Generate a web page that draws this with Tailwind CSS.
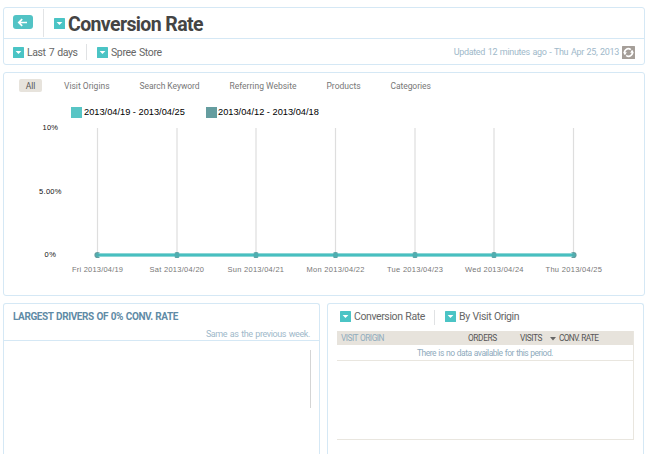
<!DOCTYPE html>
<html lang="en">
<head>
<meta charset="utf-8">
<title>Conversion Rate</title>
<script src="https://cdn.jsdelivr.net/npm/@tailwindcss/browser@4"></script>
</head>
<body class="w-[650px] h-[468px] overflow-hidden bg-white pl-[3px] pt-[7px] font-[Roboto,sans-serif] text-[#666] whitespace-nowrap">
<svg class="hidden"><symbol id="dd" viewBox="0 0 11 11"><rect width="11" height="11" rx=".6" fill="#4bc4c5"/><path d="M2.600 3.900h5.800L5.500 7z" fill="#fff"/></symbol></svg>

<header class="w-[642px] h-[58px] border border-[#d5e8f5] rounded-[3px]">
  <div class="h-[31px] flex items-center border-b border-[#d5e8f5] pl-[9px]">
    <svg class="w-5 h-[14px] -mt-[2px]" viewBox="0 0 20 14"><rect width="20" height="14" rx="3" fill="#52c3c5"/><path d="M5.600 7.500H14M9.200 4.200L5.800 7.500L9.200 10.800" fill="none" stroke="#fff" stroke-width="1.700"/></svg>
    <div class="ml-[10px] w-px h-[28px] bg-[#e2e4e6]"></div>
    <svg class="ml-[10px] mt-px w-[11px] h-[11px]"><use href="#dd"/></svg>
    <h1 class="ml-[3px] mt-[3px] text-[19.5px] leading-6 font-bold text-[#444] tracking-[-0.62px]">Conversion Rate</h1>
  </div>
  <div class="h-[25px] flex items-center pl-[9px] pr-[9px] text-[10.5px] tracking-[-0.4px] [word-spacing:0.8px]">
    <svg class="w-[11px] h-[11px] mt-px"><use href="#dd"/></svg>
    <span class="ml-[3px] mt-[2px] w-[49px]">Last 7 days</span>
    <div class="ml-[10px] w-px h-[16px] bg-[#e0e2e4]"></div>
    <svg class="ml-[10px] w-[11px] h-[11px] mt-px"><use href="#dd"/></svg>
    <span class="ml-[3px] mt-[2px] tracking-[-0.36px]">Spree Store</span>
    <span class="ml-auto mt-[3px] text-[9px] text-[#a0b9ca] tracking-[-0.34px]">Updated 12 minutes ago - Thu Apr 25, 2013</span>
    <svg class="ml-[3px] mt-px w-[13px] h-[13px]" viewBox="0 0 13 13"><rect width="13" height="13" rx=".5" fill="#a59e98"/><path d="M3.100 8.300A3.700 3.700 0 0 1 8.800 3.700M9.900 4.700A3.700 3.700 0 0 1 4.200 9.300" fill="none" stroke="#fff" stroke-width="1.600"/><path d="M1.200 6.200h3.700L3 9zM11.800 6.800H8.100L10 4z" fill="#fff"/></svg>
  </div>
</header>

<main class="mt-[7px] w-[642px] h-[224px] border border-[#d5e8f5] rounded-[3px]">
  <nav class="mt-[6px] h-[13px] flex items-center pl-[15px] text-[8.5px] text-[#777]">
    <span class="w-[23px] h-[13px] leading-[14px] text-center rounded-[2px] bg-[#e7e3dc] text-[#555]">All</span>
    <span class="ml-[22px] mt-px w-[75.500px]">Visit Origins</span>
    <span class="mt-px w-[90px] tracking-[-0.05px]">Search Keyword</span>
    <span class="mt-px w-[97px]">Referring Website</span>
    <span class="mt-px w-[64px]">Products</span>
    <span class="mt-px tracking-[-0.07px]">Categories</span>
  </nav>
  <div class="mt-[14px] h-[12px] flex items-center pl-[67px] font-['Liberation_Sans',sans-serif] text-[9.250px] text-black">
    <i class="w-[11px] h-[11px] bg-[#58c5c5]"></i><span class="ml-[2px] mt-px w-[122px]">2013/04/19 - 2013/04/25</span>
    <i class="w-[11px] h-[11px] bg-[#659d9f]"></i><span class="ml-[1px] mt-px">2013/04/12 - 2013/04/18</span>
  </div>
  <svg class="block w-[640px] h-[160px]" viewBox="4 118 640 160" font-family="Liberation Sans, sans-serif" font-size="7.500">
    <path d="M97.500 128V255M177 128V255M256 128V255M335.500 128V255M415 128V255M494 128V255M573.500 128V255" stroke="#dedede" stroke-width="1.200"/>
    <g fill="#659d9f"><circle cx="97.500" cy="255" r="3.100"/><circle cx="177" cy="255" r="3.100"/><circle cx="256" cy="255" r="3.100"/><circle cx="335.500" cy="255" r="3.100"/><circle cx="415" cy="255" r="3.100"/><circle cx="494" cy="255" r="3.100"/><circle cx="573.500" cy="255" r="3.100"/></g>
    <path d="M97.500 255H573.500" stroke="#a5dede" stroke-width="4"/>
    <path d="M97.500 255H573.500" stroke="#48bfc0" stroke-width="2.400"/>
    <g fill="#4faeb0"><circle cx="97.500" cy="255" r="2"/><circle cx="177" cy="255" r="2.600"/><circle cx="256" cy="255" r="2.600"/><circle cx="335.500" cy="255" r="2.600"/><circle cx="415" cy="255" r="2.600"/><circle cx="494" cy="255" r="2.600"/><circle cx="573.500" cy="255" r="2"/></g>
    <g fill="#111">
      <text x="42.500" y="130.200" textLength="15.500">10%</text>
      <text x="39" y="194" textLength="22.500">5.00%</text>
      <text x="44.500" y="257.400" textLength="11.500">0%</text>
    </g>
    <g fill="#777">
      <text x="72" y="272.300" textLength="51">Fri 2013/04/19</text>
      <text x="149.500" y="272.300" textLength="54.500">Sat 2013/04/20</text>
      <text x="227.500" y="272.300" textLength="56.500">Sun 2013/04/21</text>
      <text x="306.500" y="272.300" textLength="58">Mon 2013/04/22</text>
      <text x="387" y="272.300" textLength="56">Tue 2013/04/23</text>
      <text x="465" y="272.300" textLength="58.500">Wed 2013/04/24</text>
      <text x="545.500" y="272.300" textLength="56.500">Thu 2013/04/25</text>
    </g>
  </svg>
</main>

<div class="mt-[7px] flex gap-[7px]">
  <section class="w-[317px] h-[151px] border border-b-0 border-[#d5e8f5] rounded-t-[3px]">
    <div class="h-[37px] border-b border-[#d5e8f5] pl-[9px] pr-[9px]">
      <h2 class="pt-[6px] text-[10px] leading-[13px] font-bold text-[#5f8ba6] tracking-[-0.4px] [word-spacing:0.6px]">LARGEST DRIVERS OF 0% CONV. RATE</h2>
      <p class="mt-[5px] text-right text-[9px] leading-[12px] text-[#a0b9ca] tracking-[-0.4px] [word-spacing:0.8px]">Same as the previous week.</p>
    </div>
    <div class="ml-auto mr-[8px] mt-[9px] w-px h-[58px] bg-[#d5d5d5]"></div>
  </section>
  <section class="w-[317px] h-[151px] border border-b-0 border-[#d5e8f5] rounded-t-[3px] px-[9px]">
    <div class="h-[27px] flex items-center pl-[3px] text-[10.5px] tracking-[-0.4px] [word-spacing:0.6px]">
      <svg class="w-[11px] h-[11px] -mt-[2px]"><use href="#dd"/></svg>
      <span class="ml-[3px] -mt-px w-[72px]">Conversion Rate</span>
      <div class="ml-[8px] -mt-px w-px h-[15px] bg-[#e0e2e4]"></div>
      <svg class="ml-[10px] w-[11px] h-[11px] -mt-[2px]"><use href="#dd"/></svg>
      <span class="ml-[3px] -mt-px">By Visit Origin</span>
    </div>
    <div class="w-[297px] h-[109px] border-r border-b border-[#e9e6df] text-[8.5px]">
      <div class="h-[14px] flex items-center bg-[#e7e3dc] pl-[4px] pt-px text-[8.3px] text-[#555] tracking-[-0.5px] [word-spacing:0.6px]">
        <span class="w-[127px] text-[#8fabbd]">VISIT ORIGIN</span>
        <span class="w-[52px] tracking-[-0.35px]">ORDERS</span>
        <span class="w-[30px] tracking-[-0.4px]">VISITS</span>
        <svg class="w-[6px] h-[4px] mr-[3px]" viewBox="0 0 6 4"><path d="M0 0h6L3 3.500z" fill="#666"/></svg>
        <span class="tracking-[-0.66px]">CONV. RATE</span>
      </div>
      <div class="h-[16px] leading-[16px] border-b border-[#e9e6df] text-center text-[#8fabbd] tracking-[-0.5px] [word-spacing:0.6px]">There is no data available for this period.</div>
    </div>
  </section>
</div>
</body>
</html>
